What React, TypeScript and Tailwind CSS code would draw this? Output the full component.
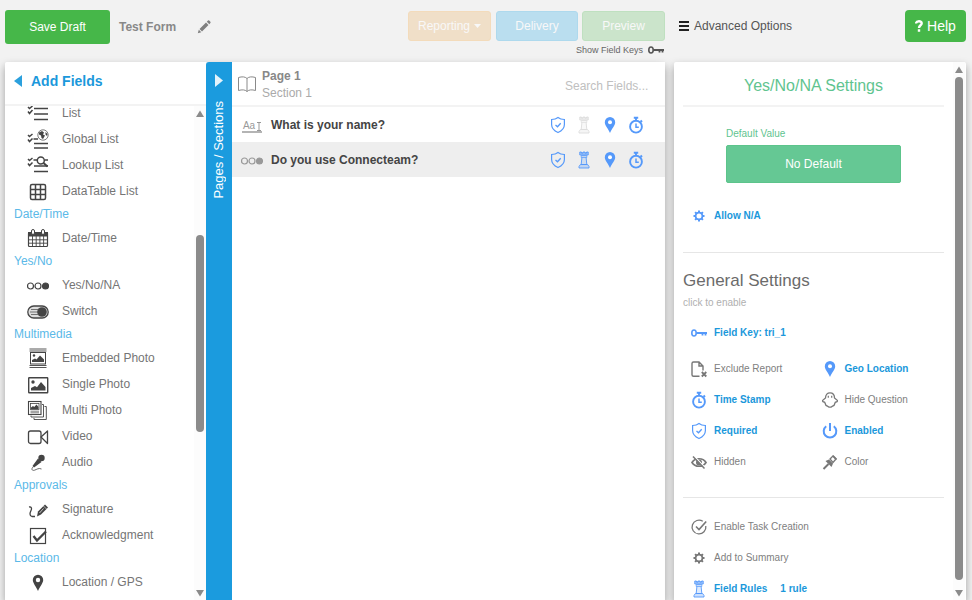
import React from "react";

type IconProps = { className?: string };

/* ---------- field type icons (22 x 20) ---------- */

function FieldIcon({ children }: { children: React.ReactNode }) {
  return (
    <svg width="22" height="20" viewBox="0 0 22 20" fill="none" stroke="currentColor" strokeWidth="1.5" className="shrink-0 text-[#444]" aria-hidden="true">
      {children}
    </svg>
  );
}

const ListIcon = () => (
  <FieldIcon>
    <path d="M7 5.500h14M7 11h14M7 16.500h14" strokeWidth="1.600" />
    <path d="M1 4l1.500 1.500L5.500 3M1 8.500L2.500 10.500 5.500 7" />
  </FieldIcon>
);

const GlobalListIcon = () => (
  <FieldIcon>
    <path d="M6.500 10h4.500M7 14.500h14M7 19h14" strokeWidth="1.600" />
    <path d="M1 6l1.500 1.500L5.500 5M1 10.500L2.500 12.500 5.500 9.500" />
    <circle cx="16" cy="6" r="5.200" strokeWidth="0.700" />
    <path d="M12 3.500l3-1.500 2 1.500-1 2 2 1-2 3.500-1.500-1-.5-2.500-2-1zM18.500 3l2 2-.5 2-1.500-1.500z" fill="currentColor" stroke="none" />
  </FieldIcon>
);

const LookupListIcon = () => (
  <FieldIcon>
    <path d="M6.500 5h4M17.500 5H21M7 11h14M7 16.500h14" strokeWidth="1.600" />
    <path d="M1 4l1.500 1.500L5.500 3M1 8.500L2.500 10.500 5.500 7.500" />
    <circle cx="13.800" cy="5.500" r="3.500" fill="#fff" />
    <path d="M16.500 8l4 3.500" strokeWidth="2" />
  </FieldIcon>
);

const TableIcon = () => (
  <FieldIcon>
    <rect x="3.500" y="3.500" width="15" height="15" rx="1.500" />
    <path d="M8.500 3.500v15M13.500 3.500v15M3.500 8.500h15M3.500 13.500h15" />
  </FieldIcon>
);

const CalendarIcon = () => (
  <FieldIcon>
    <path d="M1 4h20v4.500H1z" fill="currentColor" stroke="none" />
    <rect x="1.500" y="4.500" width="19" height="14" rx="1" strokeWidth="1.200" />
    <path d="M5.500 8v10.500M9.200 8v10.500M12.900 8v10.500M16.600 8v10.500M1.500 11.800h19M1.500 15.200h19" strokeWidth="0.900" />
    <rect x="4.500" y="1.500" width="3" height="5" rx="1.500" fill="#fff" strokeWidth="1" />
    <rect x="14.500" y="1.500" width="3" height="5" rx="1.500" fill="#fff" strokeWidth="1" />
  </FieldIcon>
);

const TriIcon = ({ className = "text-[#444]" }: IconProps) => (
  <svg width="22" height="20" viewBox="0 0 22 20" fill="none" stroke="currentColor" strokeWidth="1.200" className={`shrink-0 ${className}`} aria-hidden="true">
    <circle cx="3.500" cy="11" r="3" />
    <circle cx="11" cy="11" r="3" />
    <circle cx="18.500" cy="11" r="3" fill="currentColor" />
  </svg>
);

const SwitchIcon = () => (
  <FieldIcon>
    <rect x="0.800" y="5" width="20.400" height="12" rx="6" fill="#ddd" strokeWidth="1.300" />
    <path d="M3 11h8M4 8.500h7M4 13.500h7" strokeWidth="0.700" />
    <circle cx="15" cy="11" r="4.800" fill="currentColor" stroke="none" />
  </FieldIcon>
);

const EmbeddedIcon = () => (
  <FieldIcon>
    <path d="M2.500 1h17M2.500 19.500h17" strokeWidth="0.900" />
    <path d="M2.500 3h17M2.500 17.500h17" strokeWidth="0.900" />
    <rect x="3.500" y="4.500" width="15" height="11.500" strokeWidth="1" />
    <circle cx="7" cy="7.500" r="1.200" fill="currentColor" stroke="none" />
    <path d="M5 14v-2l3-1.500 1.500 1 3.500-4 4 4V14z" fill="currentColor" stroke="none" />
  </FieldIcon>
);

const PhotoIcon = () => (
  <FieldIcon>
    <rect x="1.700" y="3.700" width="19" height="15" rx="0.500" strokeWidth="1.400" />
    <circle cx="6" cy="8" r="1.700" fill="currentColor" stroke="none" />
    <path d="M4 16.500V14l4-2 2 1.200L14 8l4.500 5v3.500z" fill="currentColor" stroke="none" />
  </FieldIcon>
);

const MultiPhotoIcon = () => (
  <FieldIcon>
    <rect x="1.500" y="1.500" width="12.500" height="13" strokeWidth="1.100" />
    <rect x="3.500" y="3.500" width="8.500" height="6" strokeWidth="0.800" />
    <path d="M4 9V7.500L6 6l1.200 1L9.500 4.500l2 2.500v2z" fill="currentColor" stroke="none" />
    <path d="M3.500 11.200h8.500M3.500 12.800h8.500" strokeWidth="0.700" />
    <path d="M15 4.500h1.500V17H4v-1.500M17.500 6.500h1.800v13H7V18" strokeWidth="0.900" />
  </FieldIcon>
);

const VideoIcon = () => (
  <FieldIcon>
    <rect x="1.500" y="5" width="12.500" height="12.500" rx="2" strokeWidth="1.300" />
    <path d="M14 11l6.500-6v12.500z" strokeWidth="1.300" strokeLinejoin="round" />
  </FieldIcon>
);

const AudioIcon = () => (
  <FieldIcon>
    <circle cx="14.500" cy="6" r="3.200" fill="currentColor" stroke="none" />
    <path d="M11 6.500l3.500 3.500-7.500 5.500-1.500-1.500z" fill="currentColor" stroke="none" />
    <path d="M6 15c-2 2-1 4 1.500 3.200s4-2.500 7-1.200" strokeWidth="0.800" />
  </FieldIcon>
);

const SignatureIcon = () => (
  <FieldIcon>
    <path d="M2 8c2.500-.5 3 1.500 2 3.500s-2 5 1 6h3" strokeWidth="1.300" />
    <path d="M10 17.500l1-5 7-7 3 3-7 7z" fill="currentColor" stroke="none" />
    <path d="M12.500 14l4-4.500" stroke="#fff" strokeWidth="0.700" />
    <path d="M16.500 7l3 3" stroke="#fff" strokeWidth="0.600" />
  </FieldIcon>
);

const CheckIcon = () => (
  <FieldIcon>
    <rect x="3.500" y="3.500" width="15" height="15" strokeWidth="1.200" />
    <path d="M6.500 11l3.500 4.500L19 6.500" strokeWidth="2.300" />
  </FieldIcon>
);

const GpsIcon = () => (
  <FieldIcon>
    <path d="M11 19C9 14.500 5.800 11 5.800 8a5.200 5.200 0 0 1 10.400 0c0 3-3.200 6.500-5.200 11z" fill="currentColor" stroke="none" />
    <circle cx="11" cy="8" r="2.200" fill="#fff" stroke="none" />
  </FieldIcon>
);

/* ---------- setting icons ---------- */

function SettingSvg({ children, className = "" }: { children: React.ReactNode; className?: string }) {
  return (
    <svg width="18" height="18" viewBox="0 0 18 18" fill="none" stroke="currentColor" strokeWidth="1.400" className={`shrink-0 ${className}`} aria-hidden="true">
      {children}
    </svg>
  );
}

const ShieldIcon = ({ className }: IconProps) => (
  <SettingSvg className={className}>
    <path d="M9 1.500C7 3.200 4.500 3.500 2.600 3.500v5c0 4 3 6.500 6.400 8 3.400-1.500 6.400-4 6.400-8v-5C13.500 3.500 11 3.200 9 1.500z" strokeWidth="1.200" />
    <path d="M6.500 9l2 1.800 3.200-3.600" strokeWidth="1.300" />
  </SettingSvg>
);

const RookIcon = ({ className }: IconProps) => (
  <SettingSvg className={className}>
    <path d="M4.800 1v3h8.400V1M4.800 1h1.600v1.200h1.700V1h1.800v1.200h1.700V1h1.600" fill="currentColor" fillOpacity="0.500" strokeWidth="0.900" />
    <path d="M6.200 4.500h5.600v2H6.200z" fill="currentColor" fillOpacity="0.300" strokeWidth="0.700" />
    <path d="M6.900 6.500L6.200 13.500h5.600l-.7-7" fill="currentColor" fillOpacity="0.200" strokeWidth="0.900" />
    <path d="M4 17v-1.500l1.400-2h7.200l1.400 2V17z" fill="currentColor" fillOpacity="0.300" strokeWidth="0.900" />
  </SettingSvg>
);

const PinIcon = ({ className }: IconProps) => (
  <SettingSvg className={className}>
    <path d="M9 17C7.300 12.500 3.800 9.500 3.800 6.200a5.200 5.200 0 0 1 10.400 0C14.200 9.500 10.700 12.500 9 17z" fill="currentColor" stroke="none" />
    <circle cx="9" cy="6.200" r="2" fill="#fff" stroke="none" />
  </SettingSvg>
);

const StopwatchIcon = ({ className }: IconProps) => (
  <SettingSvg className={className}>
    <circle cx="9" cy="10.700" r="5.900" strokeWidth="1.900" />
    <path d="M6.800 1.800h4.400M9 2v3M13.500 4.500L15 6" strokeWidth="1.900" />
    <path d="M9 7.500v3.800h2.800" strokeWidth="1.500" />
  </SettingSvg>
);

const GearIcon = ({ className }: IconProps) => (
  <SettingSvg className={className}>
    <circle cx="9" cy="9" r="3.400" strokeWidth="1.800" />
    <path d="M9 3.500v2M9 12.500v2M3.500 9h2M12.500 9h2M5.100 5.100l1.400 1.400M11.500 11.500l1.400 1.400M5.100 12.900l1.400-1.400M11.500 6.500l1.400-1.400" strokeWidth="2" />
  </SettingSvg>
);

const KeyIcon = ({ className }: IconProps) => (
  <SettingSvg className={className}>
    <ellipse cx="4" cy="9" rx="2.200" ry="3" strokeWidth="1.600" />
    <path d="M6.500 9H17M12.500 9v2.600M15.500 9v2.600" strokeWidth="1.800" />
  </SettingSvg>
);

const FileXIcon = ({ className }: IconProps) => (
  <SettingSvg className={className}>
    <path d="M9.500 16.300H3.500a1.500 1.500 0 0 1-1.500-1.500V3.500A1.500 1.500 0 0 1 3.500 2H9l4 4v4.500M9 2v4h4" strokeWidth="1.400" />
    <path d="M11.800 12l4.500 4.500M16.300 12l-4.500 4.500" strokeWidth="1.800" />
  </SettingSvg>
);

const GhostIcon = ({ className }: IconProps) => (
  <SettingSvg className={className}>
    <path d="M4.500 7C4.500 3.500 6.500 1.800 9 1.800S13.500 3.500 13.500 7l2.800 2.300c.5 1-.3 1.700-1.300 1.700-.8 0-1 .5-1.200 1.500-.3 1.500-.8 2.500-2 2.500-.8 0-1 1.200-2.800 1.200S7 15 6.200 15c-1.200 0-1.700-1-2-2.500C4 11.500 3.800 11 3 11c-1 0-1.800-.7-1.300-1.700z" strokeWidth="1.300" />
    <path d="M7.300 4.800v2M10.700 4.800v2" strokeWidth="1.200" />
  </SettingSvg>
);

const PowerIcon = ({ className }: IconProps) => (
  <SettingSvg className={className}>
    <path d="M5.200 4.200a6.300 6.300 0 1 0 7.600 0" strokeWidth="2" />
    <path d="M9 1v8" strokeWidth="2" />
  </SettingSvg>
);

const HiddenIcon = ({ className }: IconProps) => (
  <SettingSvg className={className}>
    <path d="M2 9.500C5 4.500 13 4.500 16 9.500 13 14.500 5 14.500 2 9.500z" strokeWidth="1.700" />
    <circle cx="9" cy="9.500" r="3" fill="currentColor" stroke="none" />
    <path d="M4.500 3.500l11 11.500" stroke="#fff" strokeWidth="1.200" />
    <path d="M3 3.500l11.500 12" strokeWidth="1.500" />
  </SettingSvg>
);

const BrushIcon = ({ className }: IconProps) => (
  <SettingSvg className={className}>
    <path d="M2.500 16L7.500 11" strokeWidth="2" />
    <path d="M4.500 8L8 6.500l4 4-1.500 3.500z" fill="currentColor" stroke="none" />
    <path d="M9 6l3-3L15 6l-3 3.500z" strokeWidth="1.300" />
    <path d="M11.300 3.200l1.200-1 3.500 3.500-1.200 1.500z" fill="currentColor" stroke="none" />
  </SettingSvg>
);

const TaskIcon = ({ className }: IconProps) => (
  <SettingSvg className={className}>
    <path d="M12.800 3.300A6.900 6.900 0 1 0 15.800 8" strokeWidth="1.300" />
    <path d="M6 8.500l3 3L16.200 3.500" strokeWidth="1.600" />
  </SettingSvg>
);

const PencilIcon = () => (
  <svg width="14" height="14" viewBox="0 0 14 14" fill="currentColor" className="text-[#808080]" aria-hidden="true">
    <path d="M0.800 13.200l1-3.500 2.500 2.500zM2.500 9L9 2.500 11.500 5 5 11.500zM9.800 1.700L11 .6q.6-.5 1.200 0l1.200 1.200q.5.600 0 1.200L12.300 4.200z" />
  </svg>
);

const BookIcon = () => (
  <svg width="18" height="18" viewBox="0 0 18 18" fill="none" stroke="currentColor" strokeWidth="1" className="shrink-0 text-[#8a8a8a]" aria-hidden="true">
    <path d="M9 3.500C7 1.500 4 1.500 0.500 2.500V15.500c3.500-1 6.500-1 8.500 1 2-2 5-2 8.500-1V2.500c-3.500-1-6.500-1-8.500 1zM9 3.500v13" />
  </svg>
);

const TextFieldIcon = () => (
  <span className="flex w-[22px] shrink-0 justify-center pt-1">
    <span className="flex h-3 w-5 items-end justify-center gap-[2px] border-b-2 border-[#b4b4b4] text-[10px] leading-[10px] text-[#999]" aria-hidden="true">
      <span>Aa</span>
      <svg width="4" height="9" viewBox="0 0 4 9" fill="none" stroke="currentColor" strokeWidth="1">
        <path d="M0 0.500h4M2 0.500v8M0 8.500h4" />
      </svg>
    </span>
  </span>
);

/* ---------- scroll bar ---------- */

function ScrollBar({ before, thumb, after }: { before: string; thumb: string; after: string }) {
  return (
    <div className="flex w-3 shrink-0 flex-col items-center bg-[#fcfcfc] pt-1 pb-[3px]" aria-hidden="true">
      <svg width="10" height="7" viewBox="0 0 10 7" fill="#8b8b8b" className="shrink-0"><path d="M5 .5L9 7H1z" /></svg>
      <div className={`basis-0 ${before}`} />
      <div className={`w-2 basis-0 rounded-full bg-[#8b8b8b] ${thumb}`} />
      <div className={`basis-0 ${after}`} />
      <svg width="10" height="7" viewBox="0 0 10 7" fill="#8b8b8b" className="shrink-0"><path d="M5 6.500L9 0H1z" /></svg>
    </div>
  );
}

/* ---------- left panel ---------- */

const groups = [
  {
    title: "",
    items: [
      { label: "List", Icon: ListIcon },
      { label: "Global List", Icon: GlobalListIcon },
      { label: "Lookup List", Icon: LookupListIcon },
      { label: "DataTable List", Icon: TableIcon },
    ],
  },
  { title: "Date/Time", items: [{ label: "Date/Time", Icon: CalendarIcon }] },
  {
    title: "Yes/No",
    items: [
      { label: "Yes/No/NA", Icon: TriIcon },
      { label: "Switch", Icon: SwitchIcon },
    ],
  },
  {
    title: "Multimedia",
    items: [
      { label: "Embedded Photo", Icon: EmbeddedIcon },
      { label: "Single Photo", Icon: PhotoIcon },
      { label: "Multi Photo", Icon: MultiPhotoIcon },
      { label: "Video", Icon: VideoIcon },
      { label: "Audio", Icon: AudioIcon },
    ],
  },
  {
    title: "Approvals",
    items: [
      { label: "Signature", Icon: SignatureIcon },
      { label: "Acknowledgment", Icon: CheckIcon },
    ],
  },
  { title: "Location", items: [{ label: "Location / GPS", Icon: GpsIcon }] },
];

function AddFields() {
  return (
    <aside className="flex w-[201px] shrink-0 flex-col rounded-tl-[2px] bg-white">
      <div className="flex h-11 shrink-0 items-center border-b-2 border-[#f3f3f3] pb-1 pl-[9px]">
        <button className="flex items-center gap-[9px] text-[14px] font-bold text-[#1b98db]">
          <svg width="8" height="12" viewBox="0 0 8 12" fill="#2ba0dd" aria-hidden="true"><path d="M8 0v12L0 6z" /></svg>
          Add Fields
        </button>
      </div>
      <div className="flex min-h-0 flex-1">
        <div className="min-w-0 flex-1 overflow-hidden">
          <div className="-mt-[6px]">
            {groups.map((group, i) => (
              <section key={i}>
                {group.title && <h3 className="h-[21px] pl-[9px] text-[12px] leading-[21px] text-[#5bb9e8]">{group.title}</h3>}
                {group.items.map(({ label, Icon }) => (
                  <button key={label} className="flex h-[26px] w-full items-center gap-[13px] pl-[22px] text-left text-[12px] text-[#757575]">
                    <Icon />
                    {label}
                  </button>
                ))}
              </section>
            ))}
          </div>
        </div>
        <ScrollBar before="grow-[118]" thumb="grow-[197]" after="grow-[158]" />
      </div>
    </aside>
  );
}

/* ---------- form rows ---------- */

function QuestionRow({ icon, title, rules, selected }: { icon: React.ReactNode; title: string; rules: boolean; selected?: boolean }) {
  return (
    <li className={`flex h-[35px] items-center gap-2 pr-5 pl-[9px] ${selected ? "bg-[#eee]" : "bg-white"}`}>
      {icon}
      <span className="flex-1 text-[12px] font-bold text-[#444]">{title}</span>
      <span className="flex gap-2 text-[#5599fa]">
        <button aria-label="Required"><ShieldIcon /></button>
        <button aria-label="Rules" className={rules ? "" : "text-[#ddd]"}><RookIcon /></button>
        <button aria-label="Location"><PinIcon /></button>
        <button aria-label="Time stamp"><StopwatchIcon /></button>
      </span>
    </li>
  );
}

/* ---------- settings ---------- */

function Setting({ Icon, label, on, extra }: { Icon: React.ComponentType<IconProps>; label: string; on?: boolean; extra?: string }) {
  return (
    <button className={`flex h-[31px] items-center gap-[6px] pl-[7px] text-left text-[10px] whitespace-nowrap ${on ? "font-bold text-[#1b98db]" : "text-[#808080]"}`}>
      <Icon className={on ? "text-[#5599fa]" : "text-[#777]"} />
      {label}
      {extra && <span className="pl-[7px]">{extra}</span>}
    </button>
  );
}

function Settings() {
  return (
    <aside className="flex w-[292px] shrink-0 rounded-t-[2px] bg-white shadow-[0_4px_8px_rgba(0,0,0,0.35)]">
      <div className="min-w-0 flex-1 overflow-hidden pr-[9px] pl-[9px]">
        <h2 className="h-[45px] border-b-2 border-[#f3f3f3] text-center text-[16px] leading-[48px] text-[#5fc48f]">Yes/No/NA Settings</h2>
        <div className="flex flex-col px-[43px] pt-5">
          <label htmlFor="default-value" className="text-[10px] leading-[14px] text-[#5fc48f]">Default Value</label>
          <button id="default-value" className="mt-1 h-[38px] rounded-[2px] border border-[#5cc48b] bg-[#65c894] text-[12px] text-white">No Default</button>
        </div>
        <div className="mt-[17px] border-b border-[#e6e6e6] pb-[21px]">
          <Setting Icon={GearIcon} label="Allow N/A" on />
        </div>
        <h2 className="pt-[18px] text-[17px] leading-[20px] text-[#6b6b6b]">General Settings</h2>
        <p className="pt-[5px] text-[10px] leading-[14px] text-[#b0b0b0]">click to enable</p>
        <div className="pt-[7px]">
          <Setting Icon={KeyIcon} label="Field Key: tri_1" on />
        </div>
        <div className="grid grid-cols-2 border-b border-[#e6e6e6] pt-[5px] pb-5">
          <Setting Icon={FileXIcon} label="Exclude Report" />
          <Setting Icon={PinIcon} label="Geo Location" on />
          <Setting Icon={StopwatchIcon} label="Time Stamp" on />
          <Setting Icon={GhostIcon} label="Hide Question" />
          <Setting Icon={ShieldIcon} label="Required" on />
          <Setting Icon={PowerIcon} label="Enabled" on />
          <Setting Icon={HiddenIcon} label="Hidden" />
          <Setting Icon={BrushIcon} label="Color" />
        </div>
        <div className="pt-[13px]">
          <Setting Icon={TaskIcon} label="Enable Task Creation" />
          <Setting Icon={GearIcon} label="Add to Summary" />
          <Setting Icon={RookIcon} label="Field Rules" extra="1 rule" on />
        </div>
      </div>
      <div className="flex pr-px">
        <ScrollBar before="grow-[4]" thumb="grow-[502]" after="grow-[10]" />
      </div>
    </aside>
  );
}

export default function App() {
  return (
    <div className="flex h-screen flex-col overflow-hidden bg-[#f2f2f2] font-['Liberation_Sans',Arial,sans-serif]">
      <header className="flex h-[62px] shrink-0 items-start pr-[6px] pl-[5px]">
        <div className="flex flex-1 items-start">
          <button className="mt-[10px] h-[34px] w-[105px] rounded-[3px] bg-[#46b749] text-[12px] text-white">Save Draft</button>
          <h1 className="mt-[10px] ml-[9px] text-[12px] leading-[34px] font-bold text-[#888]">Test Form</h1>
          <button className="mt-5 ml-[21px]" aria-label="Rename form"><PencilIcon /></button>
          <div className="mt-[11px] ml-auto flex flex-col items-end">
            <div className="flex h-[30px] gap-1 text-[12px] text-[#f8f8f8]">
              <button className="mr-px flex w-[83px] items-center justify-center gap-1 rounded-[3px] border border-[#f3dbbb] bg-[#f0dfc8]">
                Reporting
                <svg width="7" height="4" viewBox="0 0 7 4" fill="currentColor" aria-hidden="true"><path d="M0 0h7L3.500 4z" /></svg>
              </button>
              <button className="w-[82px] rounded-[3px] border border-[#aed9ed] bg-[#badeef]">Delivery</button>
              <button className="w-[83px] rounded-[3px] border border-[#bfe0c0] bg-[#cbe4cb]">Preview</button>
            </div>
            <button className="flex items-center gap-1 text-[9px] leading-[18px] text-[#666]">
              Show Field Keys
              <KeyIcon className="text-[#555]" />
            </button>
          </div>
        </div>
        <div className="ml-[14px] flex w-[287px] items-start justify-between">
          <button className="mt-[11px] flex h-[30px] items-center gap-[5px] text-[12px] text-[#555]">
            <svg width="10" height="12" viewBox="0 0 10 12" stroke="#222" strokeWidth="2" aria-hidden="true"><path d="M0 2h10M0 6h10M0 10h10" /></svg>
            Advanced Options
          </button>
          <button className="mt-[10px] flex h-8 w-[61px] items-center justify-center gap-1 rounded-[4px] bg-[#46b749] text-[14px] text-white">
            <svg width="8" height="12" viewBox="0 0 8 12" fill="none" stroke="currentColor" strokeWidth="2.400" aria-hidden="true">
              <path d="M1 3.500C1.300 0.500 6.700 0.500 6.700 3.300 6.700 5.300 4 5.200 4 8M4 9.300V11.700" />
            </svg>
            Help
          </button>
        </div>
      </header>

      <div className="flex min-h-0 flex-1 gap-[9px] pr-[6px] pl-[5px]">
        <div className="flex min-w-0 flex-1 rounded-t-[2px] shadow-[0_4px_8px_rgba(0,0,0,0.35)]">
          <AddFields />
          <button className="flex w-[26px] shrink-0 flex-col items-center gap-[14px] rounded-tl-[3px] bg-[#1b9bde] pt-3 text-[13px] text-white">
            <svg width="8" height="13" viewBox="0 0 8 13" fill="#e4f3fb" aria-hidden="true"><path d="M0 0l8 6.500L0 13z" /></svg>
            <span className="rotate-180 leading-[26px] whitespace-nowrap [writing-mode:vertical-rl]">Pages / Sections</span>
          </button>
          <main className="min-w-0 flex-1 bg-white">
            <div className="flex h-[45px] items-center gap-[6px] border-b-2 border-[#f3f3f3] pr-4 pl-[6px]">
              <BookIcon />
              <div className="flex-1 pt-[2px] text-[12px] leading-[17px] text-[#aaa]">
                <h2 className="font-bold text-[#888]">Page 1</h2>
                <p>Section 1</p>
              </div>
              <input type="text" aria-label="Search fields" placeholder="Search Fields..." className="mt-1 w-[84px] bg-transparent text-[12px] outline-none placeholder:text-[#c0c0c0]" />
            </div>
            <ul>
              <QuestionRow icon={<TextFieldIcon />} title="What is your name?" rules={false} />
              <QuestionRow icon={<TriIcon className="text-[#999]" />} title="Do you use Connecteam?" rules selected />
            </ul>
          </main>
        </div>
        <Settings />
      </div>
    </div>
  );
}
